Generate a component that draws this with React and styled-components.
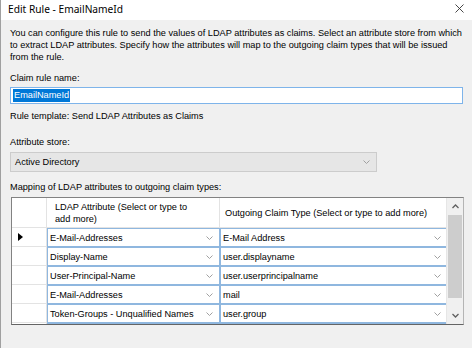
import { Fragment } from 'react';
import styled, { createGlobalStyle } from 'styled-components';

const GlobalStyle = createGlobalStyle`
  html, body {
    margin: 0;
    padding: 0;
    background: #f0f0f0;
  }
  * {
    box-sizing: border-box;
  }
`;

const mappings = [
  { ldap: 'E-Mail-Addresses', claim: 'E-Mail Address', current: true },
  { ldap: 'Display-Name', claim: 'user.displayname' },
  { ldap: 'User-Principal-Name', claim: 'user.userprincipalname' },
  { ldap: 'E-Mail-Addresses', claim: 'mail' },
  { ldap: 'Token-Groups - Unqualified Names', claim: 'user.group' },
  { ldap: '', claim: '' },
];

const Window = styled.div`
  width: 472px;
  height: 348px;
  background: #f0f0f0;
  border-left: 1px solid #a0a0a0;
  font-family: 'Liberation Sans', Arial, sans-serif;
  font-size: 9.2px;
  color: #000;
  overflow: hidden;
  display: flex;
  flex-direction: column;
`;

const TitleBar = styled.div`
  height: 20px;
  background: #fff;
  display: flex;
  align-items: center;
  justify-content: space-between;
  padding: 0 8px 2px 7px;
`;

const Title = styled.span`
  font-family: 'Noto Sans', 'Open Sans', sans-serif;
  font-size: 10.2px;
  color: #000;
`;

const CloseIcon = styled.svg`
  width: 9px;
  height: 9px;
  margin-top: -2px;
`;

const Body = styled.div`
  padding: 7px 0 0 9px;
  display: flex;
  flex-direction: column;
`;

const Text = styled.div`
  line-height: 12px;
  margin-top: ${(p) => p.$mt || 0}px;
  white-space: nowrap;
`;

const TextBox = styled.div`
  margin-top: 3px;
  width: 453px;
  height: 17px;
  background: #fff;
  border: 1px solid #7eb4ea;
  display: flex;
  align-items: center;
  padding-left: 2px;
`;

const Selected = styled.span`
  background: #0078d7;
  color: #fff;
  line-height: 13px;
  padding: 0 1px;
`;

const Combo = styled.div`
  margin-top: 4px;
  width: 367px;
  height: 20px;
  background: #e6e6e6;
  border: 1px solid #cccccc;
  display: flex;
  align-items: center;
  justify-content: space-between;
  padding: 0 6px 0 4px;
`;

const Chevron = styled.svg`
  width: 7px;
  height: 4px;
  flex: none;
`;

const Grid = styled.div`
  margin-top: 4px;
  margin-left: 1px;
  width: 453px;
  height: 128px;
  border: 1px solid #828282;
  border-right-color: #b4b4b4;
  border-bottom-color: #646464;
  background: #fff;
  display: flex;
  overflow: hidden;
`;

const Table = styled.div`
  flex: 1;
  display: grid;
  grid-template-columns: 35px 173px 228px;
  grid-auto-rows: 19px;
  grid-template-rows: 30px;
  align-content: start;
  overflow: hidden;
`;

const HeaderCell = styled.div`
  border-right: 1px solid #e3e3e3;
  border-bottom: 1px solid #e3e3e3;
  display: flex;
  align-items: center;
  padding: 0 4px 0 ${(p) => p.$pad ?? 8}px;
  line-height: 12px;
  white-space: nowrap;
  background: #fff;
`;

const RowHeader = styled.div`
  border-right: 1px solid #e3e3e3;
  border-bottom: 1px solid #e3e3e3;
  display: flex;
  align-items: center;
  padding-left: 6px;
`;

const Cell = styled.div`
  border: 1px solid #8fb7df;
  background: #fff;
  display: flex;
  align-items: center;
  justify-content: space-between;
  padding: 0 6px 0 2px;
  white-space: nowrap;
  overflow: hidden;
`;

const ScrollBar = styled.div`
  width: 17px;
  background: #f0f0f0;
  border-left: 1px solid #e6e6e6;
  display: flex;
  flex-direction: column;
  align-items: stretch;
`;

const ScrollArrow = styled.div`
  height: 17px;
  display: flex;
  align-items: center;
  justify-content: center;
`;

const Thumb = styled.div`
  margin: 0 1px;
  height: 83px;
  background: #cdcdcd;
`;

const Track = styled.div`
  flex: 1;
`;

const ChevronDown = ({ color = '#a0a0a0' }) => (
  <Chevron viewBox="0 0 7 4">
    <path d="M0.5 0.5 L3.5 3.5 L6.5 0.5" fill="none" stroke={color} strokeWidth="1" />
  </Chevron>
);

const ArrowIcon = ({ up }) => (
  <svg width="7" height="5" viewBox="0 0 7 5">
    <path
      d={up ? 'M0.5 4 L3.5 1 L6.5 4' : 'M0.5 1 L3.5 4 L6.5 1'}
      fill="none"
      stroke="#606060"
      strokeWidth="1.3"
    />
  </svg>
);

const App = () => (
  <>
    <GlobalStyle />
    <Window>
      <TitleBar>
        <Title>Edit Rule - EmailNameId</Title>
        <CloseIcon viewBox="0 0 9 9">
          <path d="M0.5 0.5 L8.5 8.5 M8.5 0.5 L0.5 8.5" stroke="#333" strokeWidth="0.9" />
        </CloseIcon>
      </TitleBar>
      <Body>
        <Text>
          You can configure this rule to send the values of LDAP attributes as claims. Select an
          attribute store from which
          <br />
          to extract LDAP attributes. Specify how the attributes will map to the outgoing claim
          types that will be issued
          <br />
          from the rule.
        </Text>
        <Text $mt={9}>Claim rule name:</Text>
        <TextBox>
          <Selected>EmailNameId</Selected>
        </TextBox>
        <Text $mt={6}>Rule template: Send LDAP Attributes as Claims</Text>
        <Text $mt={14}>Attribute store:</Text>
        <Combo>
          <span>Active Directory</span>
          <ChevronDown />
        </Combo>
        <Text $mt={9}>Mapping of LDAP attributes to outgoing claim types:</Text>
        <Grid>
          <Table>
            <HeaderCell />
            <HeaderCell>
              LDAP Attribute (Select or type to
              <br />
              add more)
            </HeaderCell>
            <HeaderCell $pad={5}>Outgoing Claim Type (Select or type to add more)</HeaderCell>
            {mappings.map((row, i) => (
              <Fragment key={i}>
                <RowHeader>
                  {row.current && (
                    <svg width="5" height="8" viewBox="0 0 5 8">
                      <path d="M0 0 L5 4 L0 8 Z" fill="#000" />
                    </svg>
                  )}
                </RowHeader>
                <Cell>
                  <span>{row.ldap}</span>
                  <ChevronDown />
                </Cell>
                <Cell>
                  <span>{row.claim}</span>
                  <ChevronDown />
                </Cell>
              </Fragment>
            ))}
          </Table>
          <ScrollBar>
            <ScrollArrow>
              <ArrowIcon up />
            </ScrollArrow>
            <Thumb />
            <Track />
            <ScrollArrow>
              <ArrowIcon />
            </ScrollArrow>
          </ScrollBar>
        </Grid>
      </Body>
    </Window>
  </>
);

export default App;
